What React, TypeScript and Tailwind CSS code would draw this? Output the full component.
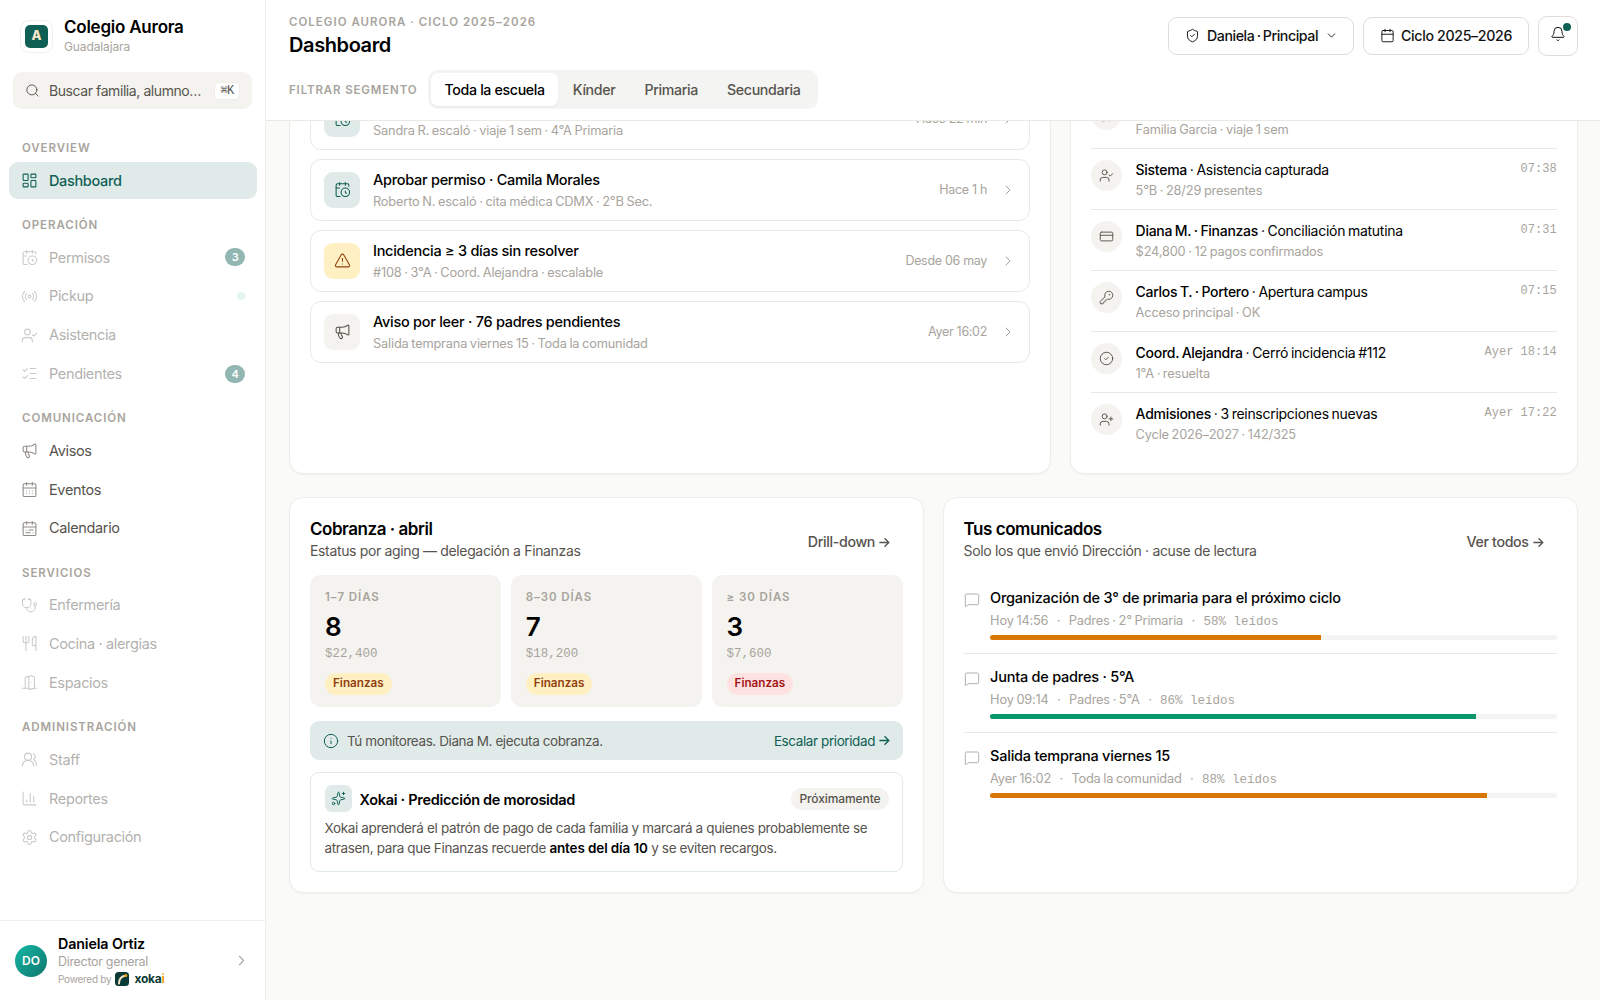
import React from 'react';
import {
  Bell,
  Calendar,
  CalendarClock,
  CalendarDays,
  CalendarRange,
  ChartColumn,
  ChevronDown,
  ChevronRight,
  CircleCheck,
  CreditCard,
  DoorOpen,
  Info,
  KeyRound,
  LayoutDashboard,
  ListChecks,
  Megaphone,
  MessageSquare,
  Radio,
  Search,
  Settings,
  ShieldCheck,
  Sparkles,
  Stethoscope,
  TriangleAlert,
  UserCheck,
  UserPlus,
  UsersRound,
  Utensils,
  type LucideIcon,
} from 'lucide-react';

interface NavItem {
  label: string;
  icon: LucideIcon;
  active?: boolean;
  disabled?: boolean;
  badge?: string;
  dot?: boolean;
}

const navSections: { title: string; items: NavItem[] }[] = [
  {
    title: 'Overview',
    items: [{ label: 'Dashboard', icon: LayoutDashboard, active: true }],
  },
  {
    title: 'Operación',
    items: [
      { label: 'Permisos', icon: CalendarClock, disabled: true, badge: '3' },
      { label: 'Pickup', icon: Radio, disabled: true, dot: true },
      { label: 'Asistencia', icon: UserCheck, disabled: true },
      { label: 'Pendientes', icon: ListChecks, disabled: true, badge: '4' },
    ],
  },
  {
    title: 'Comunicación',
    items: [
      { label: 'Avisos', icon: Megaphone },
      { label: 'Eventos', icon: CalendarDays },
      { label: 'Calendario', icon: CalendarRange },
    ],
  },
  {
    title: 'Servicios',
    items: [
      { label: 'Enfermería', icon: Stethoscope, disabled: true },
      { label: 'Cocina · alergias', icon: Utensils, disabled: true },
      { label: 'Espacios', icon: DoorOpen, disabled: true },
    ],
  },
  {
    title: 'Administración',
    items: [
      { label: 'Staff', icon: UsersRound, disabled: true },
      { label: 'Reportes', icon: ChartColumn, disabled: true },
      { label: 'Configuración', icon: Settings, disabled: true },
    ],
  },
];

const segments = ['Toda la escuela', 'Kínder', 'Primaria', 'Secundaria'];

const tasks = [
  {
    icon: CalendarClock,
    tone: 'bg-[#e0ebe9] text-[#0f5f55]',
    title: 'Aprobar permiso · Familia García',
    detail: 'Sandra R. escaló · viaje 1 sem · 4°A Primaria',
    time: 'Hace 22 min',
  },
  {
    icon: CalendarClock,
    tone: 'bg-[#e0ebe9] text-[#0f5f55]',
    title: 'Aprobar permiso · Camila Morales',
    detail: 'Roberto N. escaló · cita médica CDMX · 2°B Sec.',
    time: 'Hace 1 h',
  },
  {
    icon: TriangleAlert,
    tone: 'bg-[#fef0c3] text-[#92400e]',
    title: 'Incidencia ≥ 3 días sin resolver',
    detail: '#108 · 3°A · Coord. Alejandra · escalable',
    time: 'Desde 06 may',
  },
  {
    icon: Megaphone,
    tone: 'bg-[#f4f3ef] text-[#57534e]',
    title: 'Aviso por leer · 76 padres pendientes',
    detail: 'Salida temprana viernes 15 · Toda la comunidad',
    time: 'Ayer 16:02',
  },
];

const activity = [
  { icon: CalendarClock, who: 'Sandra R.', what: 'Escaló permiso', detail: 'Familia García · viaje 1 sem', time: '07:42' },
  { icon: UserCheck, who: 'Sistema', what: 'Asistencia capturada', detail: '5°B · 28/29 presentes', time: '07:38' },
  { icon: CreditCard, who: 'Diana M. · Finanzas', what: 'Conciliación matutina', detail: '$24,800 · 12 pagos confirmados', time: '07:31' },
  { icon: KeyRound, who: 'Carlos T. · Portero', what: 'Apertura campus', detail: 'Acceso principal · OK', time: '07:15' },
  { icon: CircleCheck, who: 'Coord. Alejandra', what: 'Cerró incidencia #112', detail: '1°A · resuelta', time: 'Ayer 18:14' },
  { icon: UserPlus, who: 'Admisiones', what: '3 reinscripciones nuevas', detail: 'Cycle 2026–2027 · 142/325', time: 'Ayer 17:22' },
];

const aging = [
  { range: '1–7 días', count: 8, amount: '$22,400', tone: 'bg-[#fef0c3] text-[#92400e]' },
  { range: '8–30 días', count: 7, amount: '$18,200', tone: 'bg-[#fef0c3] text-[#92400e]' },
  { range: '≥ 30 días', count: 3, amount: '$7,600', tone: 'bg-[#fee2e2] text-[#a31515]' },
];

const messages = [
  { title: 'Organización de 3° de primaria para el próximo ciclo', sent: 'Hoy 14:56', audience: 'Padres · 2° Primaria', read: 58, fill: 58.4, color: 'bg-[#d97706]' },
  { title: 'Junta de padres · 5°A', sent: 'Hoy 09:14', audience: 'Padres · 5°A', read: 86, fill: 85.7, color: 'bg-[#059669]' },
  { title: 'Salida temprana viernes 15', sent: 'Ayer 16:02', audience: 'Toda la comunidad', read: 88, fill: 87.7, color: 'bg-[#d97706]' },
];

const mono = "font-['Liberation_Mono',monospace]";
const card = 'rounded-[14px] border border-[#efeee9] bg-white shadow-[0_1px_2px_rgba(0,0,0,0.04)]';
const overline = 'text-[11.5px] font-semibold tracking-[0.08em] text-[#a8a49d] uppercase';
const muted = 'text-[12.8px] tracking-[-0.014em] text-[#a8a49d] [word-spacing:-0.7px]';

const Arrow: React.FC = () => (
  <svg
    viewBox="0 0 11 11"
    className="ml-[4px] size-[11px]"
    fill="none"
    stroke="currentColor"
    strokeWidth="1.3"
    strokeLinecap="square"
  >
    <path d="M1 5.5h8.6M6 1.7l3.8 3.8L6 9.3" />
  </svg>
);

const NavRow: React.FC<{ item: NavItem }> = ({ item }) => {
  const Icon = item.icon;
  return (
    <div
      className={`flex h-[36.9px] items-center rounded-[9px] px-[12px] text-[14.5px] tracking-[-0.024em] ${
        item.active ? 'bg-[#e0ebe9] font-medium text-[#0f5f55]' : 'text-[#57534e]'
      } ${item.disabled ? 'opacity-45' : ''}`}
    >
      <Icon
        size={17}
        strokeWidth={1.5}
        className={item.active ? 'text-[#0f5f55]' : 'text-[#8f8b85]'}
      />
      <span className="ml-[11px] flex-1">{item.label}</span>
      {item.badge && (
        <span className="flex h-[18px] w-5 items-center justify-center rounded-full bg-[#0f5f55] text-[11px] font-semibold text-white">
          {item.badge}
        </span>
      )}
      {item.dot && <span className="size-2 rounded-full bg-[#c5ece0]" />}
    </div>
  );
};

const Sidebar: React.FC = () => (
  <aside className="flex w-[266px] shrink-0 flex-col border-r border-[#efeee9] bg-white">
    <div className="flex items-center pt-[16px] pl-[20px]">
      <div className="flex size-[33px] items-center justify-center rounded-[9px] border border-[#efeee9] bg-white">
        <div className="flex size-[23px] items-center justify-center rounded-[5px] bg-[#0f5f55] text-[13px] font-extrabold text-[#f5e6c8]">
          A
        </div>
      </div>
      <div className="ml-[11px]">
        <div className="pt-px text-[17px] leading-[21px] font-semibold tracking-[-0.014em] text-black">
          Colegio Aurora
        </div>
        <div className="text-[12px] leading-[18px] tracking-[-0.01em] text-[#a8a49d]">Guadalajara</div>
      </div>
    </div>

    {/* Search */}
    <div className="mt-[16px] mr-[13px] ml-[13px] flex h-[37px] items-center rounded-[9px] bg-[#f4f3ef] pr-[12px] pl-[12px]">
      <Search size={15} strokeWidth={1.5} className="text-[#57534e]" />
      <span className="ml-[9px] flex-1 text-[14px] tracking-[-0.03em] whitespace-nowrap text-[#57534e]">
        Buscar familia, alumno…
      </span>
      <kbd
        className={`flex h-[18px] w-[26px] items-center justify-center rounded-[5px] border border-[#efeee9] bg-white text-[12px] tracking-[-0.06em] text-[#57534e] ${mono}`}
      >
        ⌘K
      </kbd>
    </div>

    {/* Navigation */}
    <nav className="mt-[13.3px] flex flex-1 flex-col pr-[8px] pl-[9px]">
      {navSections.map((section) => (
        <div key={section.title}>
          <div className={`h-[39.9px] pt-[17px] pl-[13px] leading-[18px] ${overline}`}>{section.title}</div>
          <div className="flex flex-col gap-[1.95px]">
            {section.items.map((item) => (
              <NavRow key={item.label} item={item} />
            ))}
          </div>
        </div>
      ))}
    </nav>

    {/* User */}
    <div className="flex h-[80px] items-center border-t border-[#efeee9] pr-[15px] pl-[15px]">
      <div className="mt-px flex size-[32px] items-center justify-center rounded-full bg-linear-to-br from-[#14b8a6] to-[#0f766e] text-[12px] font-semibold text-white">
        DO
      </div>
      <div className="mt-[1px] ml-[11px] flex-1">
        <div className="text-[14.3px] leading-[18px] font-semibold tracking-[-0.01em] text-black">Daniela Ortiz</div>
        <div className="text-[12.5px] leading-[17px] tracking-[-0.025em] text-[#a8a49d]">Director general</div>
        <div className="flex items-center text-[10px] leading-[18px] tracking-[-0.025em] text-[#a8a49d]">
          Powered by
          <svg viewBox="0 0 14 14" className="ml-[4px] size-[14px]">
            <rect width="14" height="14" rx="3.5" fill="#0b3b36" />
            <path d="M4 11.5C4 7.5 6.2 4.6 10 3.8" fill="none" stroke="#f5e6c8" strokeWidth="2" strokeLinecap="round" />
            <circle cx="10.8" cy="3.6" r="1.5" fill="#f59e0b" />
          </svg>
          <span className="ml-[5px] text-[12px] font-bold tracking-[-0.02em] text-[#0b3b36]">
            xoka<span className="text-[#f59e0b]">i</span>
          </span>
        </div>
      </div>
      <ChevronRight size={17} strokeWidth={1.5} className="text-[#a8a49d]" />
    </div>
  </aside>
);

const Header: React.FC = () => (
  <header className="z-10 h-[121px] shrink-0 border-b border-[#ebe9e3] bg-white pr-[22px] pl-[23px]">
    <div className="flex h-[70px] items-start justify-between">
      <div className="pt-[14px]">
        <div className="text-[11.5px] leading-[17px] font-semibold tracking-[0.088em] text-[#a8a49d] uppercase">
          Colegio Aurora · Ciclo 2025–2026
        </div>
        <h1 className="mt-[1px] text-[20px] leading-[27px] font-semibold tracking-[-0.02em] text-black">Dashboard</h1>
      </div>
      <div className="flex items-center gap-[9px] pt-[15.5px] text-[14.2px] font-medium tracking-[-0.024em] text-[#111]">
        <button className="flex h-[38px] w-[186px] items-center rounded-[9px] border border-[#dfddd6] pl-[16px]">
          <ShieldCheck size={15} strokeWidth={1.5} />
          <span className="ml-[7px] tracking-[-0.031em] whitespace-nowrap [word-spacing:-1px]">
            Daniela · Principal
          </span>
          <ChevronDown size={13} strokeWidth={1.7} className="ml-[7px]" />
        </button>
        <button className="flex h-[38px] w-[166px] items-center rounded-[9px] border border-[#dfddd6] pl-[16px]">
          <Calendar size={15} strokeWidth={1.5} />
          <span className="ml-[6px] whitespace-nowrap">Ciclo 2025–2026</span>
        </button>
        <button className="relative flex size-[40px] items-center justify-center rounded-[9px] border border-[#dfddd6] pb-[4px]">
          <Bell size={16} strokeWidth={1.5} />
          <span className="absolute top-[6px] right-[6px] size-2 rounded-full bg-[#0f5f55]" />
        </button>
      </div>
    </div>
    <div className="flex items-center">
      <span className="w-[139px] pt-[2px] text-[11.5px] font-semibold tracking-[0.075em] text-[#a8a49d] uppercase">
        Filtrar segmento
      </span>
      <div className="flex h-[38.6px] items-center rounded-[10px] bg-[#f4f4f2] px-[3px] text-[14.2px] font-medium tracking-[-0.024em]">
        {segments.map((segment, i) => (
          <button
            key={segment}
            className={`h-[32.5px] rounded-[7px] ${
              i === 0
                ? 'bg-white px-[13.5px] text-black shadow-[0_1px_2px_rgba(0,0,0,0.06)]'
                : 'px-[14.5px] text-[#57534e]'
            }`}
          >
            {segment}
          </button>
        ))}
      </div>
    </div>
  </header>
);

const TaskCard: React.FC = () => (
  <section className={`${card} flex flex-col gap-[9.4px] p-[20px]`}>
    {tasks.map((task) => (
      <div
        key={task.title}
        className="flex h-[61.6px] shrink-0 items-center rounded-[11px] border border-[#ebe9e3] px-[13px]"
      >
        <div className={`flex size-[36px] items-center justify-center rounded-[9px] ${task.tone}`}>
          <task.icon size={17} strokeWidth={1.5} />
        </div>
        <div className="ml-[13px] flex-1 pt-[2px]">
          <div className="text-[14.5px] leading-[20px] font-medium tracking-[-0.019em] text-black">{task.title}</div>
          <div className={`pt-px leading-[21px] ${muted}`}>{task.detail}</div>
        </div>
        <span className="pt-[2px] text-[12.5px] tracking-[-0.025em] text-[#a8a49d]">{task.time}</span>
        <ChevronRight size={16} strokeWidth={1.5} className="ml-[13px] text-[#a8a49d]" />
      </div>
    ))}
  </section>
);

const ActivityCard: React.FC = () => (
  <section className={`${card} px-[20px] pt-[20px]`}>
    {activity.map((entry) => (
      <div
        key={entry.who}
        className="flex h-[61.1px] items-start border-b border-[#ebe9e3] pt-[11px] last:border-b-0"
      >
        <div className="flex size-[31px] items-center justify-center rounded-full bg-[#f4f3ef] text-[#57534e]">
          <entry.icon size={15} strokeWidth={1.5} />
        </div>
        <div className="ml-[14px] flex-1">
          <div className="text-[14px] leading-[20px] tracking-[-0.02em] text-black [word-spacing:-0.8px]">
            <span className="font-medium">{entry.who}</span> · {entry.what}
          </div>
          <div className={`pt-px leading-[20px] ${muted}`}>{entry.detail}</div>
        </div>
        <span className={`pt-px text-[12px] leading-[17px] text-[#a8a49d] ${mono}`}>{entry.time}</span>
      </div>
    ))}
  </section>
);

const CardHeader: React.FC<{ title: string; subtitle: string; action: string }> = ({ title, subtitle, action }) => (
  <div className="flex h-[57.3px] items-start justify-between">
    <div>
      <h2 className="text-[17px] leading-[22px] font-semibold tracking-[-0.027em] text-black">{title}</h2>
      <p className="text-[14px] leading-[22px] tracking-[-0.025em] text-[#57534e]">{subtitle}</p>
    </div>
    <a className="flex items-center pt-[14px] pr-[13px] text-[14.2px] leading-[20px] font-medium tracking-[-0.024em] text-[#57534e]">
      {action}
      <Arrow />
    </a>
  </div>
);

const CollectionsCard: React.FC = () => (
  <section className={`${card} px-[20px] pt-[20px]`}>
    <CardHeader title="Cobranza · abril" subtitle="Estatus por aging — delegación a Finanzas" action="Drill-down" />
    <div className="grid grid-cols-3 gap-[9.3px]">
      {aging.map((bucket) => (
        <div key={bucket.range} className="flex h-[132px] flex-col items-start rounded-[11px] bg-[#f4f3ef] px-[15px] pt-[12.5px]">
          <div className={`leading-[18px] ${overline}`}>{bucket.range}</div>
          <div className="mt-[5.5px] text-[26px] leading-[32px] font-semibold text-black">{bucket.count}</div>
          <div className={`mt-px text-[12.5px] leading-[20px] text-[#a8a49d] ${mono}`}>{bucket.amount}</div>
          <span className={`mt-[9px] rounded-full px-[8px] text-[11.7px] leading-[21.3px] font-semibold ${bucket.tone}`}>
            Finanzas
          </span>
        </div>
      ))}
    </div>

    <div className="mt-[13.7px] flex h-[39.5px] items-center rounded-[9px] bg-[#e0ebe9] px-[13px] text-[13.5px] tracking-[-0.03em]">
      <Info size={16} strokeWidth={1.5} className="text-[#0f5f55]" />
      <span className="ml-[8px] flex-1 text-[#57534e]">Tú monitoreas. Diana M. ejecuta cobranza.</span>
      <a className="flex items-center text-[#0f5f55]">
        Escalar prioridad
        <Arrow />
      </a>
    </div>

    {/* Prediction teaser */}
    <div className="mt-[11.5px] h-[100px] rounded-[9px] border border-[#e0ebe9] px-[13.5px] pt-[12.5px]">
      <div className="flex items-center">
        <div className="flex size-[27px] items-center justify-center rounded-[7px] bg-[#e0ebe9] text-[#0f5f55]">
          <Sparkles size={15} strokeWidth={1.5} />
        </div>
        <h3 className="ml-[8px] flex-1 pt-px text-[14.5px] font-semibold tracking-[-0.021em] text-black">
          Xokai · Predicción de morosidad
        </h3>
        <span className="rounded-full bg-[#f4f3ef] px-[8px] text-[12px] leading-[21.3px] font-medium tracking-[-0.008em] text-[#57534e]">
          Próximamente
        </span>
      </div>
      <p className="mt-[6.7px] text-[13.5px] leading-[19.9px] tracking-[-0.026em] whitespace-nowrap text-[#57534e]">
        Xokai aprenderá el patrón de pago de cada familia y marcará a quienes probablemente se
        <br />
        atrasen, para que Finanzas recuerde{' '}
        <strong className="font-semibold tracking-[-0.01em] text-black">antes del día 10</strong> y se eviten recargos.
      </p>
    </div>
  </section>
);

const MessagesCard: React.FC = () => (
  <section className={`${card} px-[20px] pt-[20px]`}>
    <CardHeader title="Tus comunicados" subtitle="Solo los que envió Dirección · acuse de lectura" action="Ver todos" />
    {messages.map((message) => (
      <div key={message.title} className="flex h-[78.9px] border-b border-[#ebe9e3] pt-[13px] last:border-b-0">
        <MessageSquare size={16} strokeWidth={1.3} className="mt-[4px] shrink-0 text-[#a8a49d]" />
        <div className="ml-[10.5px] flex-1">
          <div className="text-[14.5px] leading-[20px] font-medium tracking-[-0.016em] text-black">{message.title}</div>
          <div className={`mt-[3px] flex gap-[8.4px] leading-[20px] ${muted}`}>
            <span>{message.sent}</span>
            <span>·</span>
            <span>{message.audience}</span>
            <span>·</span>
            <span className={`pt-px text-[12.5px] tracking-normal [word-spacing:0] ${mono}`}>{message.read}% leídos</span>
          </div>
          <div className="mt-[3px] h-[4.6px] overflow-hidden rounded-full bg-[#f4f4f2]">
            <div className={`h-full ${message.color}`} style={{ width: `${message.fill}%` }} />
          </div>
        </div>
      </div>
    ))}
  </section>
);

const App: React.FC = () => {
  return (
    <div className="flex h-[1000px] w-[1600px] overflow-hidden bg-[#fafaf8] font-['Inter',sans-serif]">
      <Sidebar />
      <div className="flex min-w-0 flex-1 flex-col">
        <Header />
        <main className="flex-1 overflow-hidden pr-[22.4px] pl-[23px]">
          {/* The list area sits scrolled under the header */}
          <div className="-mt-[54px] grid h-[407px] grid-cols-[3fr_2fr] gap-[18.6px]">
            <TaskCard />
            <ActivityCard />
          </div>
          <div className="mt-[23px] grid h-[396px] grid-cols-2 gap-[18.6px]">
            <CollectionsCard />
            <MessagesCard />
          </div>
        </main>
      </div>
    </div>
  );
};

export default App;
